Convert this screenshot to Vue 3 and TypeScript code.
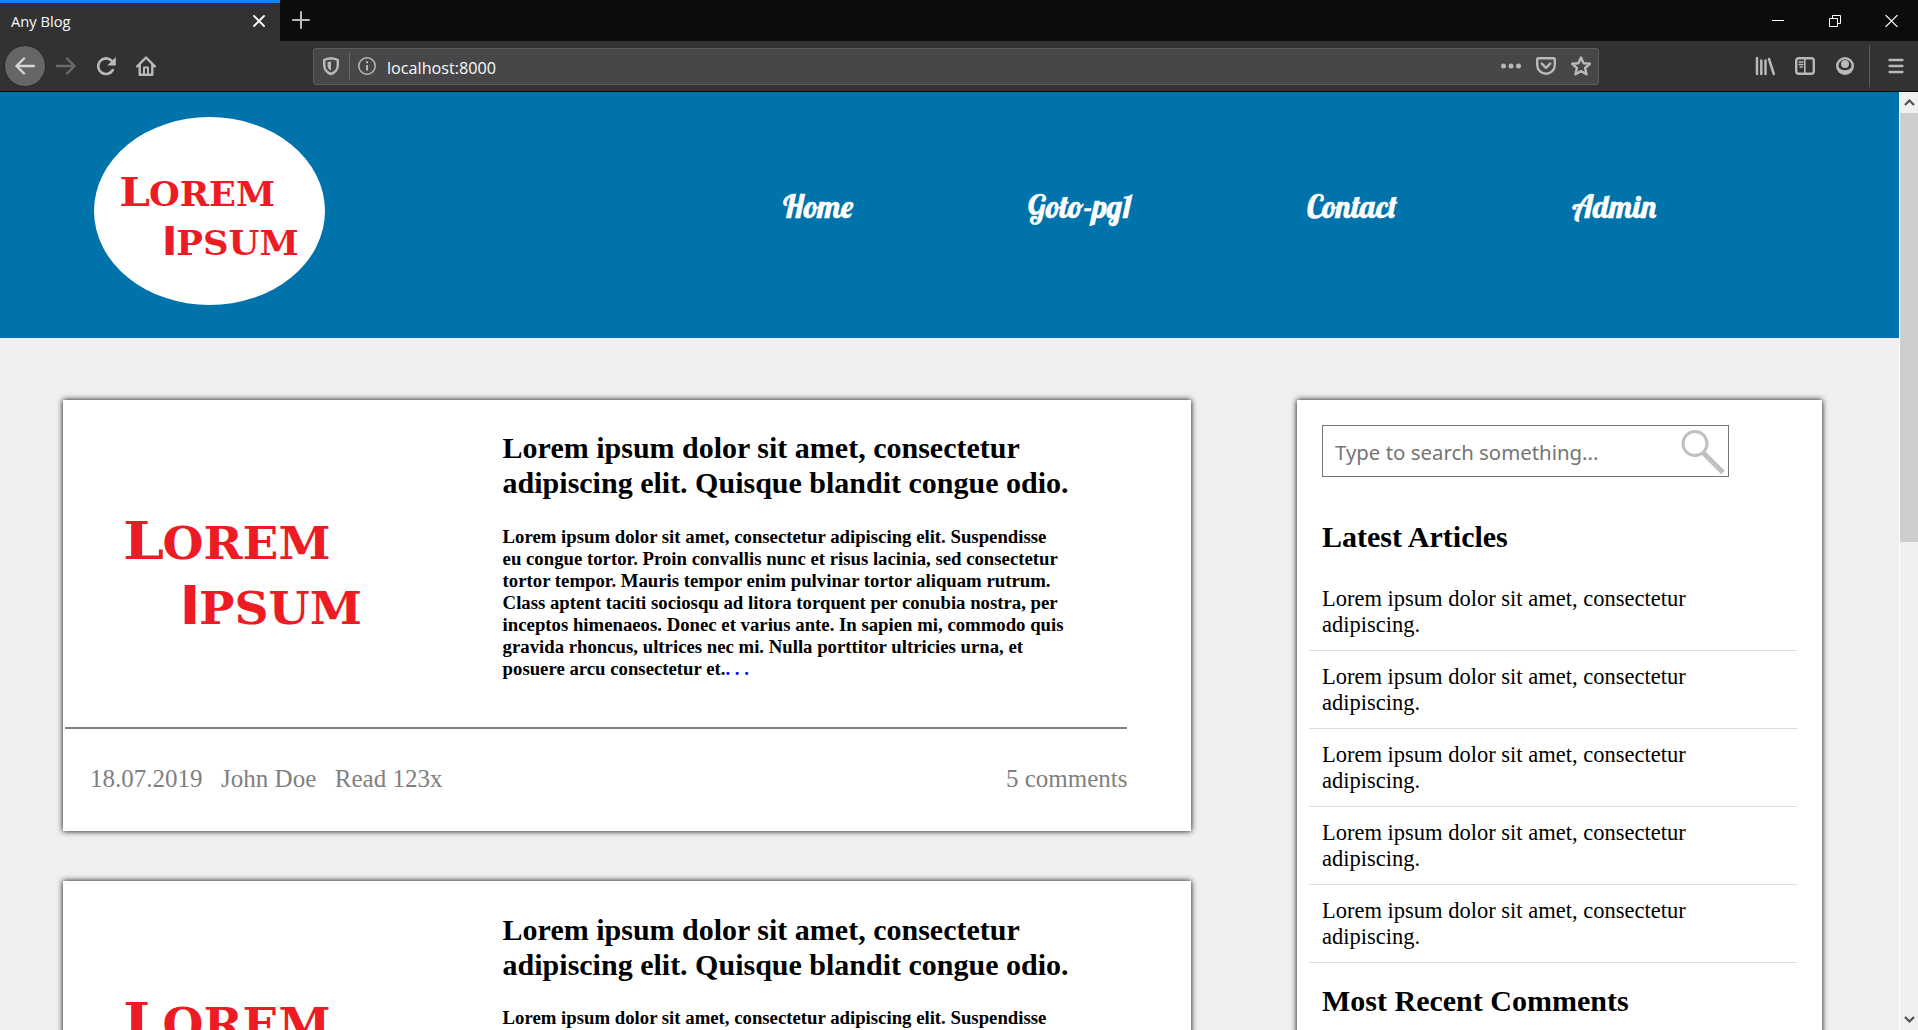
<script setup lang="ts">
interface NavItem {
  label: string
  width: number
}

const navItems: NavItem[] = [
  { label: 'Home', width: 70 },
  { label: 'Goto-pg1', width: 104 },
  { label: 'Contact', width: 90 },
  { label: 'Admin', width: 84 },
]

interface BrandRun {
  text: string
  x: number
  y: number
  size: number
  width: number
  family: string
}

const serif = '"DejaVu Serif", serif'
const brandRuns: BrandRun[] = [
  { text: 'L', x: -3, y: 38.3, size: 53, width: 41, family: serif },
  { text: 'OREM', x: 36.5, y: 38.3, size: 44, width: 168, family: serif },
  { text: 'I', x: 53.500, y: 103, size: 53, width: 21, family: '"DejaVu Sans", sans-serif' },
  { text: 'PSUM', x: 73, y: 103, size: 44, width: 163, family: serif },
]

interface Post {
  id: number
  title: string
  lines: string[]
  date: string
  author: string
  reads: number
  comments: number
}

const makePost = (id: number): Post => ({
  id,
  title: 'Lorem ipsum dolor sit amet, consectetur adipiscing elit. Quisque blandit congue odio.',
  lines: [
    'Lorem ipsum dolor sit amet, consectetur adipiscing elit. Suspendisse',
    'eu congue tortor. Proin convallis nunc et risus lacinia, sed consectetur',
    'tortor tempor. Mauris tempor enim pulvinar tortor aliquam rutrum.',
    'Class aptent taciti sociosqu ad litora torquent per conubia nostra, per',
    'inceptos himenaeos. Donec et varius ante. In sapien mi, commodo quis',
    'gravida rhoncus, ultrices nec mi. Nulla porttitor ultricies urna, et',
    'posuere arcu consectetur et.',
  ],
  date: '18.07.2019',
  author: 'John Doe',
  reads: 123,
  comments: 5,
})

const posts: Post[] = [makePost(1), makePost(2)]
const latest: string[] = Array.from({ length: 5 }, () => 'Lorem ipsum dolor sit amet, consectetur adipiscing.')
</script>

<template>
  <div class="window">
    <div class="tabbar">
      <div class="tab">
        <span class="tab-title">Any Blog</span>
        <svg class="tab-close" width="12" height="12" viewBox="0 0 12 12"><path d="M1 1l10 10M11 1L1 11" stroke="#fff" stroke-width="1.8" stroke-linecap="round" /></svg>
      </div>
      <svg class="tab-new" width="18" height="18" viewBox="0 0 18 18"><path d="M9 1v16M1 9h16" stroke="#b9b9ba" stroke-width="2" stroke-linecap="round" /></svg>
      <div class="controls">
        <svg width="12" height="12" viewBox="0 0 12 12"><path d="M0 5.5h12" stroke="#fff" /></svg>
        <svg width="12" height="12" viewBox="0 0 12 12" fill="none" stroke="#fff"><path d="M.5 3.5h8v8h-8zM3.5 3.5v-3h8v8h-3" /></svg>
        <svg width="13" height="12" viewBox="0 0 13 12"><path d="M.5 0l12 12M12.5 0l-12 12" stroke="#fff" stroke-width="1.1" /></svg>
      </div>
    </div>

    <div class="toolbar">
      <div class="back">
        <svg width="20" height="20" viewBox="0 0 20 20" class="ic"><path d="M19 10H1.5M9 2.5L1.5 10L9 17.5" /></svg>
      </div>
      <svg width="20" height="20" viewBox="0 0 20 20" class="ic forward"><path d="M1 10h17.5M11 2.5l7.5 7.5l-7.5 7.5" /></svg>
      <svg width="20" height="20" viewBox="0 0 20 20" class="ic reload"><path d="M16.8 14A7.8 7.8 0 1 1 15.5 4.7" stroke-width="2.6" /><path d="M19.8 1v8.5h-8.5z" class="solid" /></svg>
      <svg width="20" height="20" viewBox="0 0 20 20" class="ic home"><path d="M1.2 10.3L10 1.5l8.8 8.8M3.7 9v9.7h12.6V9" /><path d="M8 18.5v-7h4v7" stroke-width="2" /></svg>

      <div class="urlbar">
        <svg width="18" height="20" viewBox="0 0 18 20" class="ic shield"><path d="M9 2.2Q5 2.5 2.2 4V9c0 4.5 2.5 7.5 6.8 9c4.3-1.5 6.8-4.5 6.8-9V4Q13 2.5 9 2.2z" /><path d="M9 5.5Q7 5.7 5.5 6.4V9.5c0 2.3 1.3 4 3.5 5z" class="solid" /></svg>
        <i class="url-sep"></i>
        <svg width="18" height="18" viewBox="0 0 18 18" class="ic info"><circle cx="9" cy="9" r="8.2" stroke-width="1.5" /><path d="M9 8v5.5M9 4.3v2" stroke-width="2" stroke-linecap="butt" /></svg>
        <span class="url">localhost:8000</span>
        <div class="url-actions">
          <svg width="20" height="20" viewBox="0 0 20 20" class="ic"><g class="solid"><circle cx="2.5" cy="10" r="2.5" /><circle cx="10" cy="10" r="2.5" /><circle cx="17.5" cy="10" r="2.5" /></g></svg>
          <svg width="20" height="20" viewBox="0 0 20 20" class="ic"><path d="M2.5 2.2h15q1.3 0 1.3 1.3V9a8.8 8.8 0 0 1-17.6 0V3.5q0-1.3 1.3-1.3z" /><path d="M5.8 7.7L10 11.8l4.2-4.1" stroke-width="2.5" /></svg>
          <svg width="20" height="20" viewBox="0 0 20 20" class="ic"><path d="M10 1.5l2.6 5.7l6.2.6l-4.7 4.2l1.4 6.3L10 15.1l-5.5 3.2l1.4-6.3L1.2 7.8l6.2-.6z" /></svg>
        </div>
      </div>

      <div class="tools">
        <svg width="20" height="20" viewBox="0 0 20 20" class="ic"><path d="M2 2v16M6.3 4.5V18M10.5 4.5V18M14 3L18.8 18" stroke-width="2.5" /></svg>
        <svg width="20" height="20" viewBox="0 0 20 20" class="ic"><rect x="1.2" y="2.2" width="17.6" height="15.6" rx="2.5" /><path d="M9.8 2v16" stroke-width="1.6" /><path d="M4 6h4M4 8.5h4M5 11h2.5" stroke-width="1.3" /></svg>
        <svg width="20" height="20" viewBox="0 0 20 20" class="ic"><circle cx="10" cy="10" r="9" class="solid" /><path d="M10 3.2a6.8 6.8 0 0 1 6.5 7.8q-2.500 3.200-6.500 3.200T3.500 11A6.800 6.800 0 0 1 10 3.200z" fill="#323234" stroke="none" /><circle cx="10" cy="8" r="4" class="solid" /></svg>
        <i class="tool-sep"></i>
        <svg width="16" height="20" viewBox="0 0 16 20" class="ic menu"><path d="M1.5 4h13M1.5 10h13M1.5 16h13" stroke-width="2.3" /></svg>
      </div>
    </div>

    <div class="viewport">
      <div class="page">
        <header class="header">
          <div class="logo">
            <svg class="brand" width="178" height="83" viewBox="-2 -2 237 110">
              <text v-for="run in brandRuns" :key="run.text" :x="run.x" :y="run.y" :font-size="run.size" :font-family="run.family" :textLength="run.width" lengthAdjust="spacingAndGlyphs">{{ run.text }}</text>
            </svg>
          </div>
          <nav class="nav">
            <a v-for="item in navItems" :key="item.label">
              <svg :width="item.width" height="48"><text x="0" y="32" :textLength="item.width" lengthAdjust="spacingAndGlyphs">{{ item.label }}</text></svg>
            </a>
          </nav>
        </header>

        <main class="content">
          <section class="posts">
            <article v-for="post in posts" :key="post.id" class="card post">
              <div class="post-main">
                <svg class="brand post-img" width="237" height="110" viewBox="-2 -2 237 110">
                  <text v-for="run in brandRuns" :key="run.text" :x="run.x" :y="run.y" :font-size="run.size" :font-family="run.family" :textLength="run.width" lengthAdjust="spacingAndGlyphs">{{ run.text }}</text>
                </svg>
                <div class="post-text">
                  <h2>{{ post.title }}</h2>
                  <p>
                    <template v-for="(line, i) in post.lines" :key="i"><br v-if="i > 0" />{{ line }}</template><a>. . .</a>
                  </p>
                </div>
              </div>
              <footer class="meta">
                <span>{{ post.date }}</span>
                <span>{{ post.author }}</span>
                <span>Read {{ post.reads }}x</span>
                <span class="comments">{{ post.comments }} comments</span>
              </footer>
            </article>
          </section>

          <aside class="card sidebar">
            <div class="search">
              <span>Type to search something...</span>
              <svg width="44" height="44" viewBox="0 0 44 44" fill="none" stroke="#c0c0c0"><circle cx="14" cy="13.5" r="12" stroke-width="3" /><path d="M22 22.5L42 42.5" stroke-width="5" /></svg>
            </div>
            <h2>Latest Articles</h2>
            <ul>
              <li v-for="(item, i) in latest" :key="i">{{ item }}</li>
            </ul>
            <h2 class="recent">Most Recent Comments</h2>
          </aside>
        </main>
      </div>

      <div class="scrollbar">
        <svg width="18" height="21" viewBox="0 0 18 21" fill="none"><path d="M5 13l4.5-4.5L14 13" stroke="#505050" stroke-width="2.2" /></svg>
        <div class="thumb"></div>
        <svg class="down" width="18" height="21" viewBox="0 0 18 21" fill="none"><path d="M5 8l4.5 4.5L14 8" stroke="#505050" stroke-width="2.2" /></svg>
      </div>
    </div>
  </div>
</template>

<style>
body {
  margin: 0;
  overflow: hidden;
}
</style>

<style scoped>
.window {
  width: 1918px;
  height: 1030px;
  display: flex;
  flex-direction: column;
  overflow: hidden;
  font-family: "Liberation Serif", "Times New Roman", serif;
  color: #000;
}
svg {
  display: block;
  flex: none;
}
.tabbar {
  height: 41px;
  flex: none;
  display: flex;
  align-items: center;
  background: #0c0c0d;
  font-family: "Open Sans", "Noto Sans", sans-serif;
}
.tab {
  width: 280px;
  height: 41px;
  box-sizing: border-box;
  border-top: 3px solid #0a84ff;
  background: #323234;
  display: flex;
  align-items: center;
  justify-content: space-between;
  padding: 0 15px 2px 11px;
  color: #f9f9fa;
}
.tab-title {
  font-size: 14.7px;
}
.tab-new {
  margin: 0 0 1px 12px;
}
.controls {
  margin-left: auto;
  margin-right: 20px;
  display: flex;
  gap: 44.5px;
  align-items: center;
}
.toolbar {
  height: 51px;
  flex: none;
  box-sizing: border-box;
  border-bottom: 1px solid #0c0c0d;
  background: #323234;
  display: flex;
  align-items: center;
  padding-left: 5px;
  font-family: "Open Sans", "Noto Sans", sans-serif;
}
.ic {
  fill: none;
  stroke: #b9b9ba;
  stroke-width: 2.4;
  stroke-linejoin: round;
  stroke-linecap: round;
}
.ic .solid {
  fill: #b9b9ba;
  stroke: none;
}
.back {
  width: 40px;
  height: 40px;
  border-radius: 50%;
  background: #666667;
  box-shadow: 0 0 0 1px #29292a;
  display: flex;
  align-items: center;
  justify-content: center;
}
.back .ic {
  stroke: #d6d6d6;
}
.forward {
  margin-left: 11px;
  stroke: #6b6b6d;
}
.reload,
.home {
  margin-left: 20px;
}
.urlbar {
  width: 1286px;
  height: 37px;
  box-sizing: border-box;
  margin-left: 157px;
  border: 1px solid #5c5c5e;
  border-radius: 3px;
  background: #474749;
  display: flex;
  align-items: center;
}
.shield {
  margin-left: 8px;
}
.url-sep {
  width: 1px;
  height: 26px;
  background: #68686a;
  margin: 0 8px 0 9px;
}
.url {
  margin: 3px 0 0 11px;
  color: #f9f9fa;
  font-size: 16.2px;
  line-height: 22px;
}
.url-actions {
  margin-left: auto;
  margin-right: 7px;
  display: flex;
  gap: 15px;
}
.tools {
  margin-left: 156px;
  display: flex;
  align-items: center;
  gap: 20px;
}
.tool-sep {
  width: 1px;
  height: 42px;
  background: #5c5c5e;
  margin: 0 -1px 0 -6px;
}
.menu {
  margin-left: -1px;
}
.viewport {
  flex: 1;
  min-height: 0;
  display: flex;
}
.page {
  width: 1899px;
  background: #f0f0f0;
  overflow: hidden;
}
.header {
  height: 246px;
  background: #0073aa;
  display: flex;
  align-items: flex-start;
}
.logo {
  width: 231px;
  height: 188px;
  margin: 25px 0 0 94px;
  border-radius: 50%;
  background: #fff;
}
.logo .brand {
  margin: 59px 0 0 26px;
}
.brand {
  overflow: visible;
}
.brand text {
  font-weight: 700;
  fill: #ed1c24;
}
.nav {
  display: flex;
  gap: 175px;
  margin: 94px 0 0 458px;
}
.nav text {
  font: 400 31.25px Lobster, "Liberation Serif", serif;
  fill: #fff;
  stroke: #fff;
  stroke-width: 0.5px;
}
.nav svg {
  overflow: visible;
}
.content {
  display: flex;
  align-items: flex-start;
  gap: 106px;
  padding: 62px 0 0 63px;
}
.posts {
  display: flex;
  flex-direction: column;
  gap: 50.4px;
}
.card {
  background: #fff;
  box-shadow: 0 0 6px #000;
}
.post {
  width: 1128px;
  height: 431px;
}
.post-main {
  width: 1062px;
  height: 327px;
  margin-left: 2px;
  display: flex;
  border-bottom: 2px solid;
  border-image: linear-gradient(#555 50%, #808080 50%) 2;
}
.post-img {
  margin: 119px 0 0 59px;
}
.post-text {
  margin-left: 141.6px;
  padding-top: 30.3px;
}
.post-text h2 {
  margin: 0;
  width: 580px;
  font-size: 30px;
  line-height: 35px;
}
.post-text p {
  margin: 25.6px 0 0;
  font-size: 18.75px;
  line-height: 22px;
  font-weight: 700;
  white-space: nowrap;
}
.post-text a {
  color: #0000ee;
}
.meta {
  width: 1037.5px;
  margin-left: 27px;
  padding-top: 35px;
  display: flex;
  gap: 18.6px;
  font-size: 25px;
  line-height: 29px;
  color: #808080;
}
.comments {
  margin-left: auto;
}
.sidebar {
  width: 525px;
  height: 800px;
  box-sizing: border-box;
  padding: 25px 25px 0 12px;
}
.search {
  width: 407px;
  height: 52px;
  box-sizing: border-box;
  margin-left: 13px;
  border: 1px solid #767676;
  display: flex;
  align-items: center;
  justify-content: space-between;
  padding: 2px 3px 0 12px;
  font-family: "Noto Sans", sans-serif;
  font-size: 20.4px;
  color: #757575;
}
.sidebar h2 {
  margin: 42px 0 0 13px;
  font-size: 30px;
  line-height: 35px;
}
.sidebar ul {
  list-style: none;
  margin: 19px 0 0;
  padding: 0;
}
.sidebar li {
  height: 64px;
  padding: 13px 80px 0 13px;
  border-bottom: 1px solid #dcdcdc;
  font-size: 22.5px;
  line-height: 26px;
}
.sidebar h2.recent {
  margin-top: 20px;
}
.scrollbar {
  width: 18px;
  border-left: 1px solid #fff;
  background: #f0f0f0;
  display: flex;
  flex-direction: column;
}
.thumb {
  height: 429px;
  background: #cdcdcd;
}
.down {
  margin-top: auto;
}
</style>
